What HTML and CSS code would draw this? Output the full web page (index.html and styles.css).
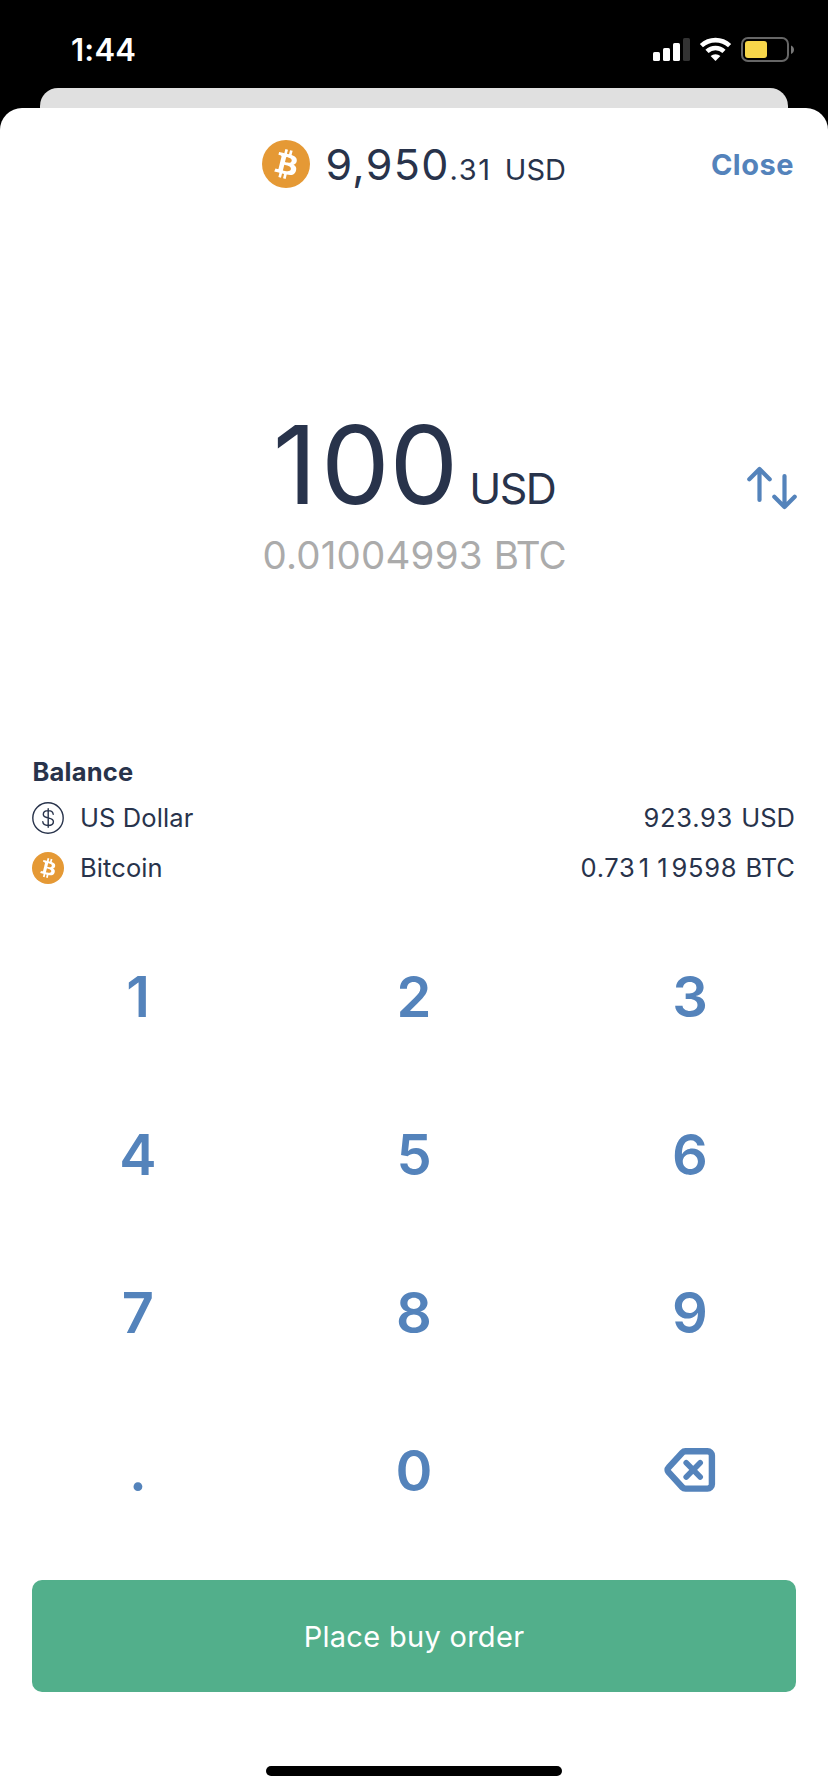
FILE: index.html
```html
<!DOCTYPE html>
<html lang="en">
<head>
<meta charset="utf-8">
<title>Buy Bitcoin</title>
<link rel="stylesheet" href="styles.css">
</head>
<body>
<svg class="defs" width="0" height="0" aria-hidden="true">
  <symbol id="btc" viewBox="0 0 32 32">
    <circle cx="16" cy="16" r="16" fill="#e59935"/>
    <path fill="#fff" d="M23.189 14.02c.314-2.096-1.283-3.223-3.465-3.975l.708-2.84-1.728-.43-.69 2.765c-.454-.114-.92-.22-1.385-.326l.695-2.783L15.596 6l-.708 2.839c-.376-.086-.746-.17-1.104-.26l.002-.009-2.384-.595-.46 1.846s1.283.294 1.256.312c.7.175.826.638.805 1.006l-.806 3.235c.048.012.11.03.18.057l-.183-.045-1.13 4.532c-.086.212-.303.531-.793.41.018.025-1.256-.313-1.256-.313l-.858 1.978 2.25.561c.418.105.828.215 1.231.318l-.715 2.872 1.727.43.708-2.84c.472.127.93.245 1.378.357l-.706 2.828 1.728.43.715-2.866c2.948.558 5.164.333 6.097-2.333.752-2.146-.037-3.385-1.588-4.192 1.13-.26 1.98-1.003 2.207-2.538zm-3.95 5.538c-.533 2.147-4.148.986-5.32.695l.95-3.805c1.172.293 4.929.872 4.37 3.11zm.535-5.569c-.487 1.953-3.495.96-4.47.717l.86-3.45c.975.243 4.118.696 3.61 2.733z"/>
  </symbol>
</svg>
<div class="status">
  <div class="status-row">
    <span class="time">1:44</span>
    <svg class="status-icons" width="144" height="28" viewBox="0 0 144 28">
      <g fill="#fff">
        <rect x="1" y="15" width="7" height="9" rx="1.6"/>
        <rect x="11" y="11" width="7" height="13" rx="1.6"/>
        <rect x="21" y="6" width="7" height="18" rx="1.6"/>
      </g>
      <rect x="31" y="1" width="7" height="23" rx="1.6" fill="#333"/>
      <g fill="none" stroke="#fff" stroke-width="4.600">
        <path d="M49.400 8.600A20.800 20.800 0 0 1 77.600 8.600"/>
        <path d="M55 14.400A12.400 12.400 0 0 1 72 14.400"/>
      </g>
      <path fill="#fff" d="M63.500 24l-4.900-4.900a7.200 7.200 0 0 1 9.800 0z"/>
      <rect x="90" y="1" width="46" height="23" rx="6" fill="none" stroke="#666" stroke-width="2"/>
      <rect x="93" y="4" width="22" height="17" rx="3" fill="#f7d64a"/>
      <path fill="#777" d="M139 8.500c4 1.500 4 7 0 8.500z"/>
    </svg>
  </div>
  <div class="back-card"></div>
</div>
<main class="sheet">
  <header class="head">
    <div class="price">
      <svg width="48" height="48"><use href="#btc"/></svg>
      <div class="price-text"><span class="price-main">9,950</span><span class="price-sub"><span class="price-cents">.31</span> USD</span></div>
    </div>
    <a class="close">Close</a>
  </header>
  <section class="amount">
    <div class="amount-col">
      <div class="amount-row"><span class="amount-num"><span class="amount-lead">1</span>00</span><span class="amount-cur">USD</span></div>
      <div class="amount-alt">0.01004993 <span class="amount-alt-cur">BTC</span></div>
    </div>
    <svg class="swap" width="52" height="44" viewBox="0 0 52 44" fill="none" stroke="#5483bb" stroke-width="4.200" stroke-linecap="round" stroke-linejoin="round">
      <path d="M14.500 34V3M4.300 13.200L14.500 3l10.200 10.200M39.500 10v31M29.300 30.700L39.500 41l10.200-10.300"/>
    </svg>
  </section>
  <section class="balance">
    <h2 class="balance-title">Balance</h2>
    <div class="balance-row">
      <svg width="32" height="32" viewBox="0 0 32 32" fill="none" stroke="#28334b">
        <circle cx="16" cy="16" r="15.200" stroke-width="1.400"/>
        <path stroke-width="1.400" stroke-linecap="round" d="M16.200 6.700v18.600M21.200 12.200c-.2-2.100-2.100-3.600-4.900-3.600-2.900 0-5 1.500-5 3.700 0 2 1.400 2.900 4.200 3.500l1.500.3c3 .6 4.400 1.600 4.400 3.700 0 2.300-2.100 3.700-5.200 3.700s-5.200-1.500-5.400-3.700"/>
      </svg>
      <span class="coin">US Dollar</span>
      <span class="value"><span class="digits">923.93</span> USD</span>
    </div>
    <div class="balance-row">
      <svg width="32" height="32"><use href="#btc"/></svg>
      <span class="coin">Bitcoin</span>
      <span class="value"><span class="digits">0.73<span class="one">1</span><span class="one">1</span>9598</span> BTC</span>
    </div>
  </section>
  <section class="keypad">
    <span class="key">1</span><span class="key">2</span><span class="key">3</span>
    <span class="key">4</span><span class="key">5</span><span class="key">6</span>
    <span class="key">7</span><span class="key">8</span><span class="key">9</span>
    <span class="key">.</span><span class="key">0</span>
    <span class="key key-icon"><svg width="52" height="46" viewBox="0 0 52 46" fill="none" stroke="#5483bb" stroke-width="6.400" stroke-linecap="round" stroke-linejoin="round">
      <path d="M21.500 4.200H43.500a4.400 4.400 0 0 1 4.400 4.400V37.200a4.400 4.400 0 0 1-4.400 4.400H21.500a4.400 4.400 0 0 1-3.200-1.400L4.500 25.200a3.200 3.200 0 0 1 0-4.500L18.300 5.600a4.400 4.400 0 0 1 3.200-1.400z"/>
      <path stroke-width="5.600" d="M22.200 15.800L36.200 30M36.200 15.800L22.200 30"/>
    </svg></span>
  </section>
  <button class="submit">Place buy order</button>
  <div class="home-bar"></div>
</main>
</body>
</html>
```
FILE: styles.css
```css
* { box-sizing: border-box; }
body {
  margin: 0;
  width: 828px;
  height: 1792px;
  overflow: hidden;
  background: #000;
  color: #28334b;
  font-family: Inter, "Liberation Sans", sans-serif;
}
.defs { display: none; }
.status { height: 108px; }
.status-row {
  height: 88px;
  padding: 37px 32px 0 71px;
  display: flex;
  justify-content: space-between;
  align-items: flex-start;
}
.time { color: #fff; font-size: 31px; line-height: 26px; font-weight: 600; letter-spacing: 0.2px; }
.back-card { height: 20px; margin: 0 40px; background: #e0e0e0; border-radius: 18px 18px 0 0; }
.sheet {
  height: 1684px;
  background: #fff;
  border-radius: 22px 22px 0 0;
  display: flex;
  flex-direction: column;
}
.head {
  height: 112px;
  padding: 0 34px;
  display: grid;
  grid-template-columns: 1fr auto 1fr;
  align-items: center;
}
.price { grid-column: 2; display: flex; align-items: center; gap: 15.500px; }
.price-text { line-height: 50px; white-space: nowrap; padding-top: 9px; }
.price-main { font-size: 43px; letter-spacing: 1.3px; }
.price-sub { font-size: 29px; word-spacing: 5px; }
.price-cents { letter-spacing: 1.6px; }
.close { justify-self: end; color: #5483bb; font-size: 29px; font-weight: 700; letter-spacing: 0.5px; }
.amount {
  height: 533px;
  padding: 189px 31px 0;
  display: grid;
  grid-template-columns: 1fr auto 1fr;
  align-items: start;
}
.amount-col { grid-column: 2; display: flex; flex-direction: column; align-items: center; white-space: nowrap; }
.amount-row { height: 110px; line-height: 110px; display: flex; align-items: baseline; gap: 11px; }
.amount-num { font-size: 109px; letter-spacing: -0.1px; }
.amount-lead { margin-right: 4px; }
.amount-cur { font-size: 43px; letter-spacing: -1.5px; }
.amount-alt { margin-top: 13px; font-size: 38.500px; line-height: 46px; letter-spacing: 0.2px; color: #ababab; }
.amount-alt-cur { letter-spacing: -1px; }
.swap { justify-self: end; margin-top: 57px; }
.balance { height: 164px; padding: 0 33px 0 32px; }
.balance-title { margin: 0 0 11px; padding-left: 0.500px; font-size: 25.500px; line-height: 38px; font-weight: 700; letter-spacing: 0.2px; }
.balance-row { height: 32px; margin-bottom: 18px; display: flex; align-items: center; }
.coin { margin-left: 16px; font-size: 25.500px; line-height: 30px; letter-spacing: 0.1px; }
.value { margin-left: auto; font-size: 25.500px; line-height: 30px; word-spacing: 1px; }
.digits { letter-spacing: 0.7px; }
.one { margin: 0 3.300px; }
.one + .one { margin-left: 4px; }
.keypad { display: grid; grid-template-columns: repeat(3, 1fr); grid-auto-rows: 158px; }
.key {
  display: flex;
  align-items: center;
  justify-content: center;
  padding-top: 2px;
  color: #5483bb;
  font-size: 56px;
  font-weight: 600;
}
.key-icon { padding-top: 0; }
.submit {
  height: 112px;
  margin: 31px 32px 0;
  border: 0;
  border-radius: 10px;
  background: #52af8b;
  color: #fff;
  font-family: inherit;
  font-size: 29px;
  letter-spacing: 0.3px;
}
.home-bar { width: 296px; height: 10px; margin: 74px auto 0; border-radius: 5px; background: #000; }
```
